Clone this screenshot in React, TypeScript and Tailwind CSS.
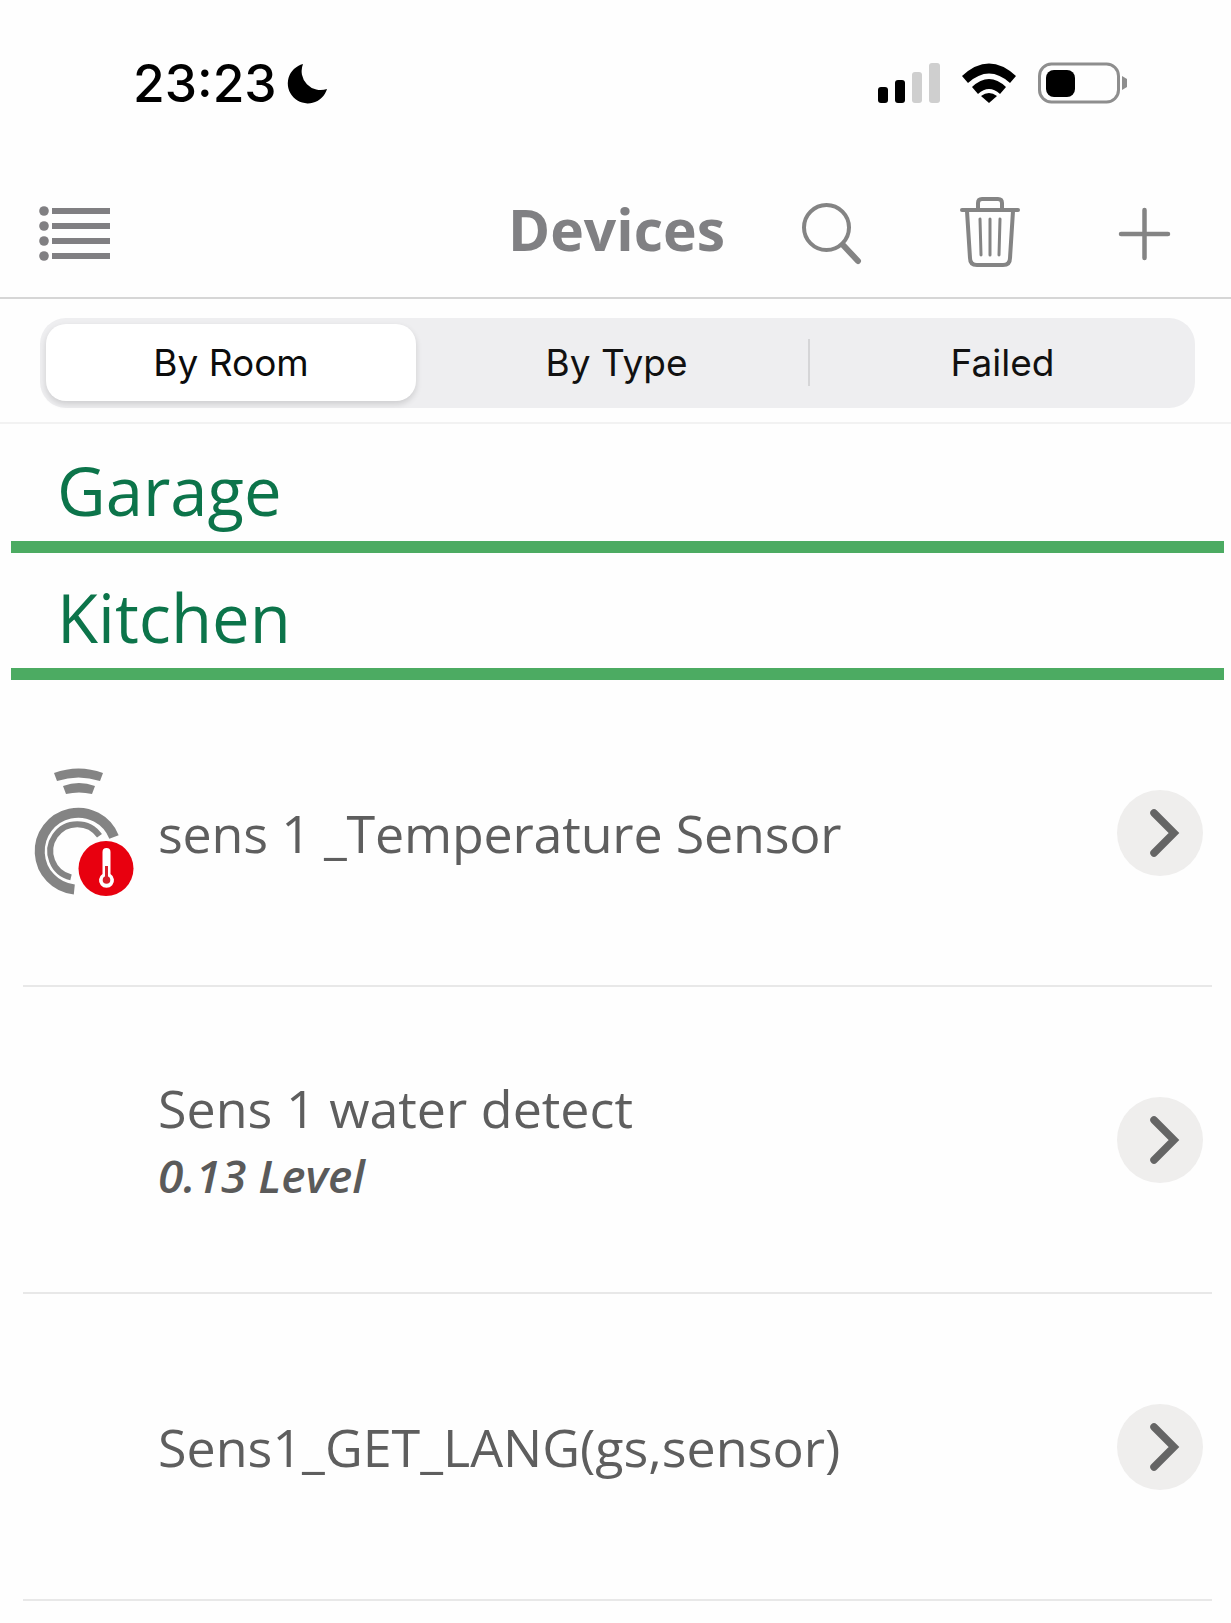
import React from "react";

function Chevron() {
  return (
    <div className="w-[86px] h-[86px] rounded-full bg-[#efeeed] flex items-center justify-center shrink-0">
      <svg width="86" height="86" viewBox="0 0 86 86">
        <path d="M37 23 L57 43 L37 63" fill="none" stroke="#656565" strokeWidth="7.5" strokeLinecap="round" strokeLinejoin="miter" />
      </svg>
    </div>
  );
}

function SensorIcon() {
  return (
    <svg width="100" height="130" viewBox="0 2 100 130" className="shrink-0 overflow-visible">
      <path d="M19 7 Q43.5 -2 68 7 L65 15 Q43.5 8 22 15 Z" fill="#848484" />
      <path d="M28 20 Q44 14 60 20 L57 28 Q44 25 31 28 Z" fill="#848484" />
      <g transform="translate(-1 2)">
        <path d="M80 69 A38.5 38.5 0 1 0 40.3 121.5" fill="none" stroke="#848484" strokeWidth="10" />
        <path d="M65.5 67.8 A27 27 0 1 0 37 109.4" fill="none" stroke="#848484" strokeWidth="6" />
      </g>
      <circle cx="71" cy="102.5" r="29.5" fill="#fefefe" />
      <circle cx="71" cy="102.5" r="27.5" fill="#e8000f" />
      <path d="M67.5 86 A4 4 0 0 1 75.5 86 L75.5 108 A7.5 7.5 0 1 1 67.5 108 Z" fill="#fff" />
      <rect x="70" y="100" width="3" height="12" fill="#d8202a" />
      <circle cx="71.5" cy="114" r="3.8" fill="#d8202a" />
    </svg>
  );
}

function Row({ title, sub, icon, tight }: { title: string; sub?: string; icon?: boolean; tight?: boolean }) {
  return (
    <div className="h-[307px] ml-[23px] mr-[19px] border-b-2 border-[#e8e8e8] flex items-center">
      <div className="w-[135px] pl-[12px] shrink-0 flex">{icon ? <SensorIcon /> : null}</div>
      <div className={sub ? "flex-1 min-w-0 pt-[3px]" : "flex-1 min-w-0"}>
        <div className={tight ? "text-[52px] leading-[66px] text-[#5e5e5e] tracking-[-0.2px]" : "text-[52px] leading-[66px] text-[#5e5e5e]"}>{title}</div>
        {sub ? <div className="mt-[1px] text-[46px] leading-[66px] italic font-semibold text-[#5a5a5a]">{sub}</div> : null}
      </div>
      <div className="mr-[9px]"><Chevron /></div>
    </div>
  );
}

function Section({ name, tall }: { name: string; tall?: boolean }) {
  return (
    <div className={tall ? "ml-[11px] mr-[7px] h-[129px] border-b-[12px] border-[#4cab62] flex items-end pl-[46px]" : "ml-[11px] mr-[7px] h-[127px] border-b-[12px] border-[#4cab62] flex items-end pl-[46px]"}>
      <div className="text-[67px] leading-[92px] pb-[5px] text-[#0c744a]">{name}</div>
    </div>
  );
}

export default function App() {
  return (
    <div className="w-[1231px] h-[1623px] overflow-hidden bg-[#fefefe] font-['Open_Sans',sans-serif]">
      <div className="h-[170px] flex items-start pt-[56px] pl-[133px] pr-[103px] justify-between">
        <div className="flex items-center gap-[9px]">
          <span className="text-[51.5px] leading-[54px] font-medium text-black font-['Inter',sans-serif]">23:23</span>
          <svg width="42" height="42" viewBox="0 0 42 42" className="mt-[2px]">
            <path d="M17 1 A20 20 0 1 0 41 26 A19 19 0 0 1 17 1 Z" fill="#000" />
          </svg>
        </div>
        <div className="flex items-center gap-[21px] pt-[6px]">
          <svg width="62" height="40" viewBox="0 0 62 40">
            <rect x="0" y="24" width="10" height="16" rx="3" fill="#000" />
            <rect x="17" y="17" width="10" height="23" rx="3" fill="#000" />
            <rect x="34" y="9" width="10" height="31" rx="3" fill="#cfcfcf" />
            <rect x="51" y="0" width="11" height="40" rx="3" fill="#cfcfcf" />
          </svg>
          <svg width="56" height="40" viewBox="0 0 56 40">
            <path d="M1 13 Q28 -12 55 13 L49 20 Q28 1 7 20 Z" fill="#000" />
            <path d="M11 24 Q28 8 45 24 L39 31 Q28 21 17 31 Z" fill="#000" />
            <path d="M20 33 Q28 27 36 33 L28 40 Z" fill="#000" />
          </svg>
          <svg width="90" height="42" viewBox="0 0 90 42">
            <rect x="1.5" y="2" width="79" height="38" rx="12" fill="none" stroke="#8e8e8e" strokeWidth="3" />
            <rect x="8" y="8" width="29" height="27" rx="8" fill="#000" />
            <path d="M84 14 L89 17 V25 L84 28 Z" fill="#8e8e8e" />
          </svg>
        </div>
      </div>

      <div className="h-[129px] border-b-2 border-[#d6d6d6] flex items-start pl-[39px]">
        <svg width="72" height="58" viewBox="0 0 72 58" className="mt-[35px]">
          <g fill="#807f82">
            <circle cx="5" cy="6" r="4.8" />
            <circle cx="5" cy="21" r="4.8" />
            <circle cx="5" cy="36" r="4.8" />
            <circle cx="5" cy="51" r="4.8" />
            <rect x="13" y="3" width="58" height="6" />
            <rect x="13" y="18" width="58" height="6" />
            <rect x="13" y="33" width="58" height="6" />
            <rect x="13" y="48" width="58" height="6" />
          </g>
        </svg>
        <div className="ml-[397px] mt-[21px] text-[57px] leading-[76px] font-bold text-[#808083]">Devices</div>
        <svg width="64" height="66" viewBox="0 0 64 66" className="ml-[76px] mt-[32px]">
          <circle cx="25.5" cy="25.5" r="22.5" fill="none" stroke="#848484" strokeWidth="4" />
          <path d="M42 43 L57 59" stroke="#848484" strokeWidth="6" strokeLinecap="round" />
        </svg>
        <svg width="62" height="72" viewBox="0 0 62 72" className="ml-[95px] mt-[26px]">
          <g fill="none" stroke="#848484" strokeLinecap="round">
            <path d="M2 14 H58" strokeWidth="4" />
            <path d="M18 13 V7 Q18 3 22 3 H38 Q42 3 42 7 V13" strokeWidth="4" />
            <path d="M7 15 L10 62 Q10 69 17 69 H43 Q50 69 50 62 L53 15" strokeWidth="4" />
            <path d="M20 23 L21 59 M30 23 V59 M40 23 L39 59" strokeWidth="3" />
          </g>
        </svg>
        <svg width="54" height="54" viewBox="0 0 54 54" className="ml-[96px] mt-[37px]">
          <path d="M3 27 H50 M26.5 3 V51" stroke="#848484" strokeWidth="4.5" strokeLinecap="round" />
        </svg>
      </div>

      <div className="h-[125px] pt-[19px] pl-[40px] pr-[36px] border-b-2 border-[#f2f2f2]">
        <div className="h-[90px] rounded-[26px] bg-[#eeeef0] grid grid-cols-3 text-[37px] leading-[44px] pb-[1px] text-[#111] font-['Inter',sans-serif]">
          <div className="ml-[6px] mr-[9px] my-[6px] rounded-[20px] bg-white shadow-[0_3px_6px_rgba(0,0,0,0.14)] flex items-center justify-center text-[#0c0c0c]">By Room</div>
          <div className="flex items-center">
            <div className="flex-1 text-center">By Type</div>
            <div className="w-[2px] h-[47px] bg-[#d5d5d7]" />
          </div>
          <div className="flex items-center justify-center">Failed</div>
        </div>
      </div>

      <Section name="Garage" tall />
      <Section name="Kitchen" />
      <Row title="sens 1 _Temperature Sensor" icon tight />
      <Row title="Sens 1 water detect" sub="0.13 Level" />
      <Row title="Sens1_GET_LANG(gs,sensor)" />
    </div>
  );
}
